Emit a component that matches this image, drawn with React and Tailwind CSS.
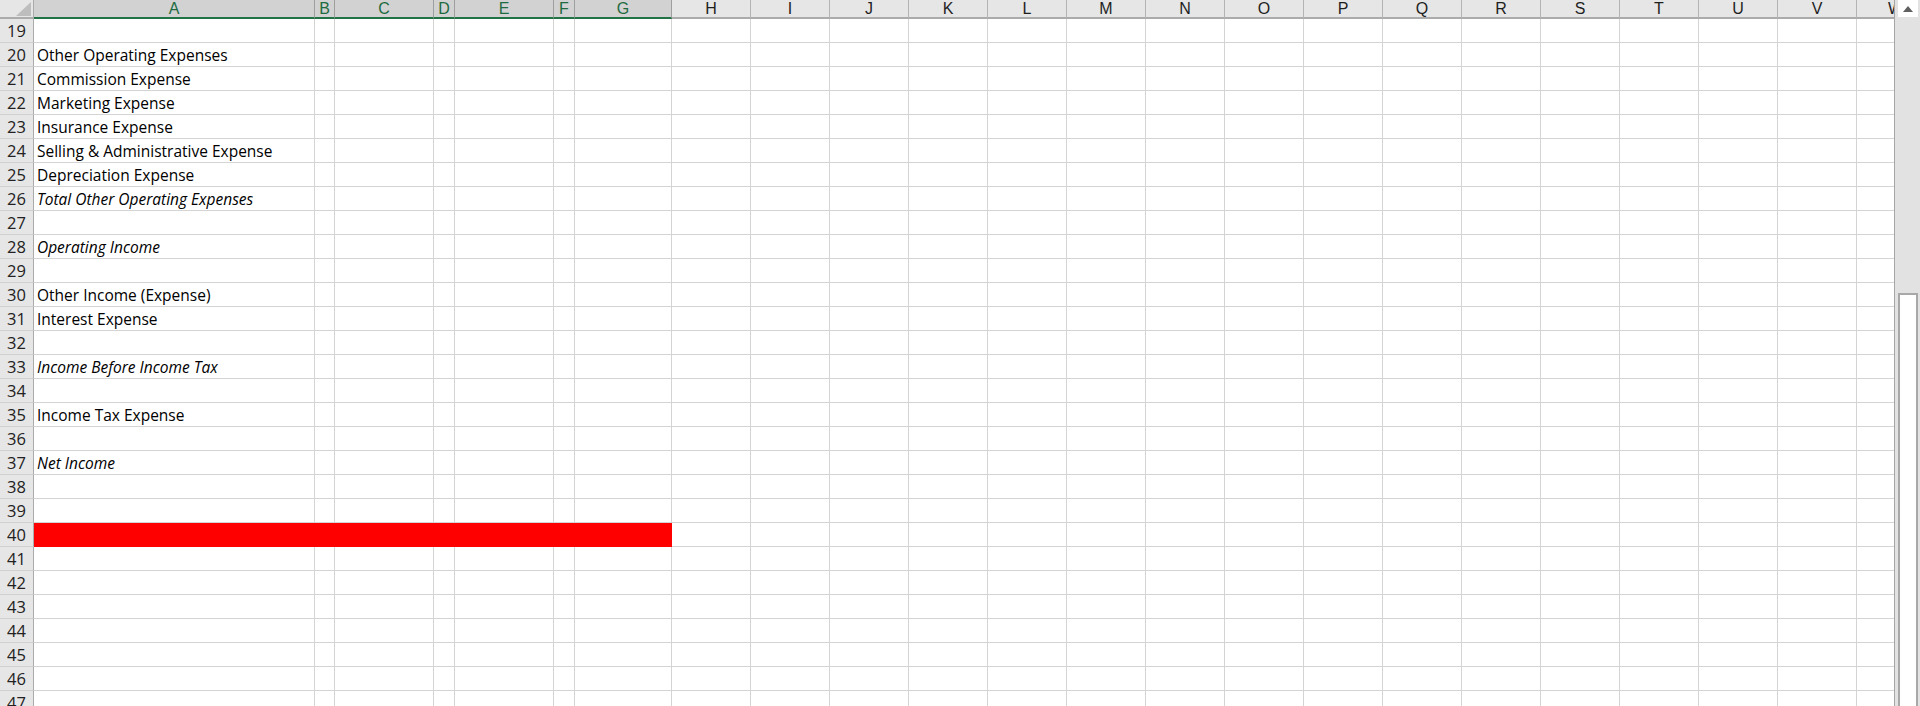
import React from 'react';

const columns = [
    { key: 'A', w: 'w-[281px]', sel: true },
    { key: 'B', w: 'w-[20px]', sel: true },
    { key: 'C', w: 'w-[99px]', sel: true },
    { key: 'D', w: 'w-[21px]', sel: true },
    { key: 'E', w: 'w-[99px]', sel: true },
    { key: 'F', w: 'w-[21px]', sel: true },
    { key: 'G', w: 'w-[97px]', sel: true },
    ...['H', 'I', 'J', 'K', 'L', 'M', 'N', 'O', 'P', 'Q', 'R', 'S', 'T', 'U', 'V'].map((k) => ({ key: k, w: 'w-[79px]', sel: false })),
];

const labels = {
    20: { text: 'Other Operating Expenses' },
    21: { text: 'Commission Expense' },
    22: { text: 'Marketing Expense' },
    23: { text: 'Insurance Expense' },
    24: { text: 'Selling & Administrative Expense' },
    25: { text: 'Depreciation Expense' },
    26: { text: 'Total Other Operating Expenses', italic: true },
    28: { text: 'Operating Income', italic: true },
    30: { text: 'Other Income (Expense)' },
    31: { text: 'Interest Expense' },
    33: { text: 'Income Before Income Tax', italic: true },
    35: { text: 'Income Tax Expense' },
    37: { text: 'Net Income', italic: true },
};

const rows = Array.from({ length: 29 }, (_, i) => 19 + i);

const HeaderRow = () => (
    <div className="flex h-[19px] shrink-0">
        {/* corner */}
        <div className="w-[34px] shrink-0 bg-[#e6e6e6] border-r border-b-2 border-[#ababab] relative">
            <svg width="34" height="17" className="absolute left-0 top-0">
                <polygon points="16,16 31,16 31,2" fill="#bdbdbd" />
            </svg>
        </div>
        {columns.map((c) => (
            <div
                key={c.key}
                className={`${c.w} shrink-0 flex items-center justify-center border-r border-b-2 text-[16px] leading-none ${
                    c.sel
                        ? 'bg-[#d2d2d2] text-[#1e6b41] border-r-[#9f9f9f] border-b-[#217346]'
                        : 'bg-[#e6e6e6] text-[#1f1f1f] border-r-[#b4b4b4] border-b-[#ababab]'
                }`}
            >
                {c.key}
            </div>
        ))}
        <div className="w-[37px] shrink-0 overflow-hidden bg-[#e6e6e6] border-b-2 border-[#ababab] text-[16px] leading-none text-[#1f1f1f] flex items-center">
            <span className="ml-[31px]">W</span>
        </div>
    </div>
);

const SheetRow = ({ n }) => {
    const label = labels[n];
    const red = n === 40;
    return (
        <div className="flex h-[24px] shrink-0">
            <div className="w-[34px] shrink-0 bg-[#e6e6e6] border-r border-r-[#ababab] border-b border-b-[#d0d0d0] flex items-center justify-center text-[16.5px] text-[#222] leading-none pt-[1px]">
                {n}
            </div>
            {red ? (
                <div className="w-[638px] shrink-0 bg-[#ff0000]" />
            ) : (
                columns.slice(0, 7).map((c, i) => (
                    <div
                        key={c.key}
                        className={`${c.w} shrink-0 border-r border-b border-[#d4d4d4] bg-white relative`}
                    >
                        {i === 0 && label && (
                            <span
                                className={`absolute left-[3px] bottom-[3px] whitespace-nowrap text-[15.5px] leading-none text-black ${
                                    label.italic ? 'italic' : ''
                                }`}
                            >
                                {label.text}
                            </span>
                        )}
                    </div>
                ))
            )}
            {columns.slice(7).map((c) => (
                <div key={c.key} className={`${c.w} shrink-0 border-r border-b border-[#d4d4d4] bg-white`} />
            ))}
            <div className="w-[37px] shrink-0 border-b border-[#d4d4d4] bg-white" />
        </div>
    );
};

const ScrollBar = () => (
    <div className="w-[26px] shrink-0 h-full bg-[#e2e2e2] border-l border-[#a6a6a6] flex flex-col pl-[3px] pr-[2px]">
        <div className="h-[17px] w-[20px] bg-white flex items-center justify-center shrink-0">
            <svg width="10" height="6" viewBox="0 0 10 6">
                <polygon points="0,6 10,6 5,0" fill="#606060" />
            </svg>
        </div>
        <div className="h-[276px] shrink-0" />
        <div className="flex-1 w-[20px] bg-white border-2 border-b-0 border-[#a8a8a8]" />
    </div>
);

export default function App() {
    return (
        <div
            className="w-[1920px] h-[706px] overflow-hidden bg-white flex"
            style={{ fontFamily: '"Open Sans", "Liberation Sans", sans-serif' }}
        >
            <div className="flex flex-col w-[1894px] shrink-0 overflow-hidden" style={{ fontFamily: '"Liberation Sans", Arial, sans-serif' }}>
                <HeaderRow />
                <div className="flex flex-col" style={{ fontFamily: '"Open Sans", sans-serif' }}>
                    {rows.map((n) => (
                        <SheetRow key={n} n={n} />
                    ))}
                </div>
            </div>
            <ScrollBar />
        </div>
    );
}
